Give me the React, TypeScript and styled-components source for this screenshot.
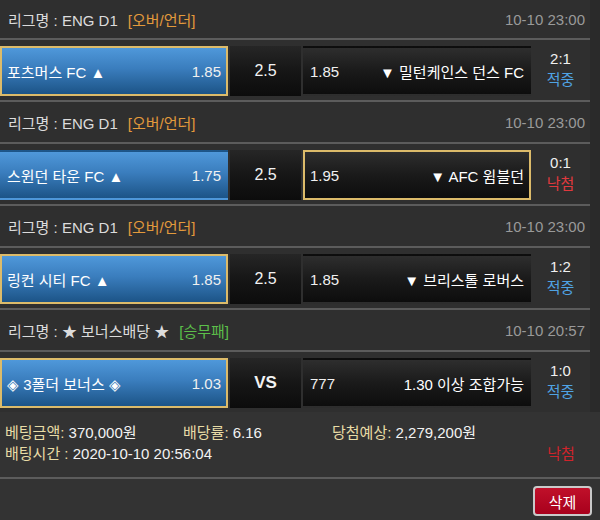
import React from "react";
import styled, { createGlobalStyle } from "styled-components";

const GlobalStyle = createGlobalStyle`
  html, body {
    margin: 0;
    padding: 0;
    background: #2a2a2a;
  }
  body {
    font-family: "Liberation Sans", "Noto Sans CJK KR", Arial, sans-serif;
    font-size: 15px;
    color: #e6e6e6;
  }
  * { box-sizing: border-box; }
`;

const Page = styled.div`
  width: 600px;
  height: 520px;
  overflow: hidden;
  background: #2a2a2a;
`;

const List = styled.div`
  width: 590px;
  background: #2f2f2f;
`;

const Header = styled.div<{ $first?: boolean }>`
  height: ${(p) => (p.$first ? 40 : 42)}px;
  display: flex;
  align-items: center;
  justify-content: space-between;
  padding: 0 5px 0 8px;
  border-bottom: 2px solid #5c5c5c;
  background: #2f2f2f;
`;

const League = styled.div`
  color: #dcdcdc;
  white-space: nowrap;
`;

const Tag = styled.span<{ $color: string }>`
  color: ${(p) => p.$color};
  margin-left: 10px;
`;

const DateText = styled.div`
  color: #9a9a9a;
`;

const Row = styled.div<{ $last?: boolean }>`
  display: flex;
  height: ${(p) => (p.$last ? 60 : 62)}px;
  padding: 6px 0 4px;
  border-bottom: ${(p) => (p.$last ? "none" : "2px solid #5c5c5c")};
  background: #2f2f2f;
`;

const Pick = styled.div<{ $selected?: boolean; $home?: boolean }>`
  width: 228px;
  height: 50px;
  display: flex;
  align-items: center;
  justify-content: space-between;
  padding: 0 5px;
  border: 2px solid ${(p) => (p.$selected ? "#dcbb6a" : "transparent")};
  background: ${(p) =>
    p.$home
      ? "linear-gradient(to bottom, #4f98da 0%, #3a7dbd 45%, #1c5487 100%)"
      : "linear-gradient(to bottom, #2e2e2e 0%, #1a1a1a 50%, #0d0d0d 100%)"};
  color: #ffffff;
  white-space: nowrap;
`;

const Odds = styled.span`
  color: #f0f0f0;
`;

const Line = styled.div`
  width: 71px;
  height: 50px;
  margin: 0 2px;
  display: flex;
  align-items: center;
  justify-content: center;
  background: linear-gradient(to bottom, #262626 0%, #161616 50%, #0c0c0c 100%);
  color: #f2f2f2;
  font-size: 16px;
`;

const Vs = styled.span`
  font-weight: bold;
  font-size: 17px;
`;

const Result = styled.div`
  flex: 1;
  display: flex;
  flex-direction: column;
  align-items: center;
  justify-content: center;
  line-height: 21px;
  margin-top: -4px;
`;

const Score = styled.div`
  color: #f0f0f0;
`;

const Status = styled.div<{ $win?: boolean }>`
  color: ${(p) => (p.$win ? "#4fa3e3" : "#e0393e")};
`;

const Summary = styled.div`
  background: #333333;
  padding: 10px 10px 13px 5px;
  border-bottom: 2px solid #5c5c5c;
  line-height: 21px;
`;

const SumRow = styled.div`
  display: grid;
  grid-template-columns: 178px 149px 1fr 58px;
  align-items: center;
  white-space: nowrap;
`;

const Label = styled.span`
  color: #e8dca6;
`;

const Value = styled.span`
  color: #f2f2f2;
`;

const Lost = styled.span`
  color: #d0242b;
  text-align: center;
  grid-column: 4;
`;

const Footer = styled.div`
  height: 41px;
  background: #333333;
  display: flex;
  justify-content: flex-end;
  align-items: flex-start;
  padding: 7px 8px 0 0;
`;

const DeleteButton = styled.button`
  width: 59px;
  height: 30px;
  border: 2px solid #c9c9c9;
  border-radius: 4px;
  background: linear-gradient(to bottom, #c0102a 0%, #a8001c 100%);
  color: #ffffff;
  font-family: "Liberation Sans", "Noto Sans CJK KR", sans-serif;
  font-size: 15px;
  padding: 0;
  cursor: pointer;
`;

type Match = {
  league: string;
  tag: string;
  tagColor: string;
  date: string;
  home: string;
  homeOdds: string;
  line: string;
  awayOdds: string;
  away: string;
  selected: "home" | "away";
  score: string;
  win: boolean;
};

const matches: Match[] = [
  {
    league: "리그명 : ENG D1",
    tag: "[오버/언더]",
    tagColor: "#e39a3c",
    date: "10-10 23:00",
    home: "포츠머스 FC ▲",
    homeOdds: "1.85",
    line: "2.5",
    awayOdds: "1.85",
    away: "▼ 밀턴케인스 던스 FC",
    selected: "home",
    score: "2:1",
    win: true,
  },
  {
    league: "리그명 : ENG D1",
    tag: "[오버/언더]",
    tagColor: "#e39a3c",
    date: "10-10 23:00",
    home: "스윈던 타운 FC ▲",
    homeOdds: "1.75",
    line: "2.5",
    awayOdds: "1.95",
    away: "▼ AFC 윔블던",
    selected: "away",
    score: "0:1",
    win: false,
  },
  {
    league: "리그명 : ENG D1",
    tag: "[오버/언더]",
    tagColor: "#e39a3c",
    date: "10-10 23:00",
    home: "링컨 시티 FC ▲",
    homeOdds: "1.85",
    line: "2.5",
    awayOdds: "1.85",
    away: "▼ 브리스톨 로버스",
    selected: "home",
    score: "1:2",
    win: true,
  },
  {
    league: "리그명 : ★ 보너스배당 ★",
    tag: "[승무패]",
    tagColor: "#5cbf4a",
    date: "10-10 20:57",
    home: "◈ 3폴더 보너스 ◈",
    homeOdds: "1.03",
    line: "VS",
    awayOdds: "777",
    away: "1.30 이상 조합가능",
    selected: "home",
    score: "1:0",
    win: true,
  },
];

export default function App() {
  return (
    <Page>
      <GlobalStyle />
      <List>
        {matches.map((m, i) => (
          <React.Fragment key={i}>
            <Header $first={i === 0}>
              <League>
                {m.league}
                <Tag $color={m.tagColor}>{m.tag}</Tag>
              </League>
              <DateText>{m.date}</DateText>
            </Header>
            <Row $last={i === matches.length - 1}>
              <Pick $home $selected={m.selected === "home"}>
                <span>{m.home}</span>
                <Odds>{m.homeOdds}</Odds>
              </Pick>
              <Line>{m.line === "VS" ? <Vs>VS</Vs> : m.line}</Line>
              <Pick $selected={m.selected === "away"}>
                <Odds>{m.awayOdds}</Odds>
                <span>{m.away}</span>
              </Pick>
              <Result>
                <Score>{m.score}</Score>
                <Status $win={m.win}>{m.win ? "적중" : "낙첨"}</Status>
              </Result>
            </Row>
          </React.Fragment>
        ))}
      </List>
      <Summary>
        <SumRow>
          <span>
            <Label>베팅금액: </Label>
            <Value>370,000원</Value>
          </span>
          <span>
            <Label>배당률: </Label>
            <Value>6.16</Value>
          </span>
          <span>
            <Label>당첨예상: </Label>
            <Value>2,279,200원</Value>
          </span>
        </SumRow>
        <SumRow>
          <span style={{ gridColumn: "1 / 4" }}>
            <Label>배팅시간 : </Label>
            <Value>2020-10-10 20:56:04</Value>
          </span>
          <Lost>낙첨</Lost>
        </SumRow>
      </Summary>
      <Footer>
        <DeleteButton>삭제</DeleteButton>
      </Footer>
    </Page>
  );
}
